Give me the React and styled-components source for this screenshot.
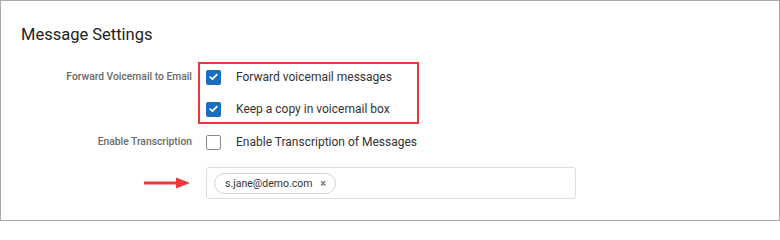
import React from "react";
import styled, { createGlobalStyle } from "styled-components";

const GlobalStyle = createGlobalStyle`
  * {
    box-sizing: border-box;
  }

  body {
    margin: 0;
    background: #ffffff;
    font-family: Roboto, "Liberation Sans", Arial, sans-serif;
  }
`;

const Frame = styled.section`
  width: 780px;
  height: 221px;
  padding: 24px 0 0 20px;
  border: 1px solid #aaaaaa;
  background: #ffffff;
`;

const Title = styled.h2`
  margin: 0 0 18px;
  font-size: 16.5px;
  font-weight: 400;
  line-height: 19px;
  color: #222222;
`;

const SettingsGrid = styled.div`
  display: grid;
  grid-template-columns: 171px 1fr;
  column-gap: 6px;
  align-items: start;
`;

const FieldLabel = styled.div`
  margin-top: ${(props) => props.offset || 0}px;
  font-size: 10.3px;
  font-weight: 500;
  line-height: 16px;
  text-align: right;
  color: #6a6a6a;
`;

const Highlight = styled.div`
  display: flex;
  flex-direction: column;
  gap: 16px;
  width: 221px;
  padding: 5px 6px;
  border: 2px solid #ee363d;
`;

const PlainControl = styled.div`
  margin-top: ${(props) => props.offset || 0}px;
  padding-left: 8px;
`;

const Option = styled.label`
  display: flex;
  align-items: center;
  gap: 15px;
  height: 16px;
  font-size: 12px;
  color: #333333;
`;

const Box = styled.span`
  display: flex;
  align-items: center;
  justify-content: center;
  width: 15px;
  height: 15px;
  border-radius: 2px;
  border: ${(props) => (props.checked ? "none" : "1.5px solid #8a8a8a")};
  background: ${(props) => (props.checked ? "#1a6dbf" : "#ffffff")};
`;

const ArrowCell = styled.div`
  display: flex;
  justify-content: flex-end;
  align-items: center;
  height: 32px;
  margin-top: 17px;
  padding-right: 2px;
`;

const EmailInput = styled.div`
  display: flex;
  align-items: center;
  width: 370px;
  height: 32px;
  margin-top: 17px;
  margin-left: 8px;
  padding: 0 7px;
  border: 1px solid #dddddd;
  border-radius: 3px;
`;

const Chip = styled.span`
  display: inline-flex;
  align-items: center;
  gap: 8px;
  height: 21px;
  padding: 0 9px 0 10px;
  border: 1px solid #d2d2d2;
  border-radius: 11px;
  font-size: 10.5px;
  color: #333333;
`;

const ChipClose = styled.span`
  font-size: 11px;
  font-weight: 700;
  line-height: 1;
  color: #777777;
`;

const Checkbox = ({ checked, children }) => (
  <Option>
    <Box checked={checked}>
      {checked && (
        <svg width="9" height="8" viewBox="0 0 9 8">
          <path
            d="M1.2 4.2 L3.4 6.2 L7.8 1.6"
            fill="none"
            stroke="#ffffff"
            strokeWidth="1.7"
            strokeLinecap="round"
            strokeLinejoin="round"
          />
        </svg>
      )}
    </Box>
    {children}
  </Option>
);

const App = () => {
  return (
    <>
      <GlobalStyle />
      <Frame>
        <Title>Message Settings</Title>
        <SettingsGrid>
          <FieldLabel offset={7}>Forward Voicemail to Email</FieldLabel>
          <Highlight>
            <Checkbox checked>Forward voicemail messages</Checkbox>
            <Checkbox checked>Keep a copy in voicemail box</Checkbox>
          </Highlight>

          <FieldLabel offset={10}>Enable Transcription</FieldLabel>
          <PlainControl offset={10}>
            <Checkbox>Enable Transcription of Messages</Checkbox>
          </PlainControl>

          <ArrowCell>
            <svg width="46" height="12" viewBox="0 0 46 12">
              <path d="M0 6 H34" stroke="#ee363d" strokeWidth="3" />
              <path d="M32 0.5 L46 6 L32 11.5 Z" fill="#ee363d" />
            </svg>
          </ArrowCell>
          <EmailInput>
            <Chip>
              s.jane@demo.com
              <ChipClose>×</ChipClose>
            </Chip>
          </EmailInput>
        </SettingsGrid>
      </Frame>
    </>
  );
};

export default App;
